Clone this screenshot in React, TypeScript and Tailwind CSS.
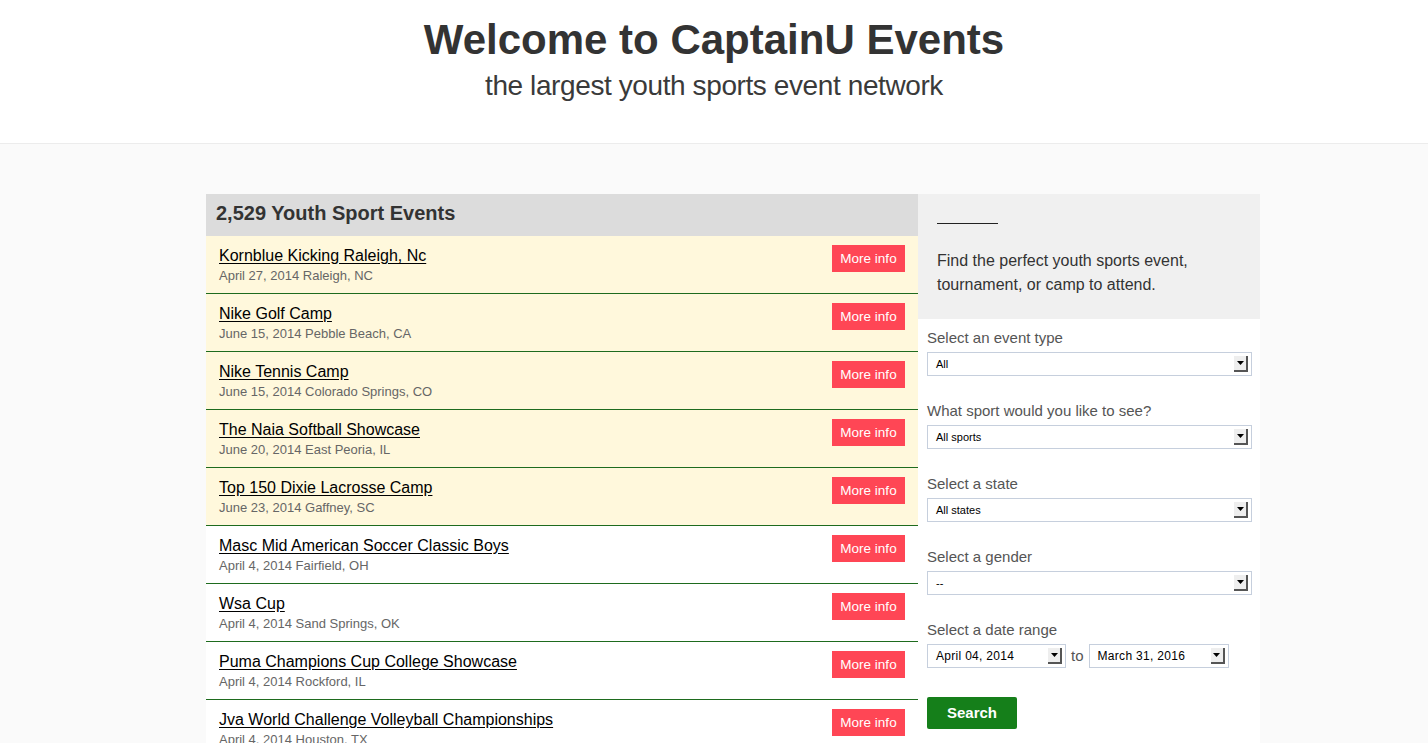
import { ReactNode } from "react";

const events = [
  { name: "Kornblue Kicking Raleigh, Nc", info: "April 27, 2014 Raleigh, NC", featured: true },
  { name: "Nike Golf Camp", info: "June 15, 2014 Pebble Beach, CA", featured: true },
  { name: "Nike Tennis Camp", info: "June 15, 2014 Colorado Springs, CO", featured: true },
  { name: "The Naia Softball Showcase", info: "June 20, 2014 East Peoria, IL", featured: true },
  { name: "Top 150 Dixie Lacrosse Camp", info: "June 23, 2014 Gaffney, SC", featured: true },
  { name: "Masc Mid American Soccer Classic Boys", info: "April 4, 2014 Fairfield, OH", featured: false },
  { name: "Wsa Cup", info: "April 4, 2014 Sand Springs, OK", featured: false },
  { name: "Puma Champions Cup College Showcase", info: "April 4, 2014 Rockford, IL", featured: false },
  { name: "Jva World Challenge Volleyball Championships", info: "April 4, 2014 Houston, TX", featured: false },
];

function Arrow() {
  return (
    <span className="flex h-[16px] w-[14px] items-center justify-center bg-[#eeeeee] border-r-2 border-b-2 border-[#555]">
      <svg width="7" height="4" viewBox="0 0 7 4">
        <path d="M0 0h7L3.5 4z" fill="#000" />
      </svg>
    </span>
  );
}

function FakeSelect({ value, className = "w-[325px]", mono = false }: { value: string; className?: string; mono?: boolean }) {
  return (
    <div className={`flex h-[24px] items-center justify-between border border-[#c6cfdd] bg-white pl-[8px] pr-[3px] ${className}`}>
      <span className={mono ? "text-[12px] tracking-[0.3px] text-black" : "text-[11px] text-black"}>{value}</span>
      <Arrow />
    </div>
  );
}

function Field({ label, children }: { label: string; children: ReactNode }) {
  return (
    <div className="mb-[26px]">
      <div className="mb-[5px] text-[15px] leading-[18px] text-[#555]">{label}</div>
      {children}
    </div>
  );
}

export default function App() {
  return (
    <div className="min-h-screen bg-[#fafafa] text-[#333]" style={{ fontFamily: '"Helvetica Neue", "Liberation Sans", Arial, sans-serif' }}>
      <header className="h-[144px] border-b border-[#ececec] bg-white pt-[16px] text-center">
        <h1 className="text-[42px] font-bold leading-[48px] text-[#333]">Welcome to CaptainU Events</h1>
        <p className="mt-[5px] text-[28px] font-light leading-[34px] tracking-[-0.4px] text-[#3a3a3a]">the largest youth sports event network</p>
      </header>

      <main className="ml-[206px] mt-[50px] flex w-[1054px]">
        <section className="w-[712px] bg-white">
          <div className="flex h-[42px] items-center bg-[#dcdcdc] px-[10px] pb-[5px]">
            <h2 className="text-[20px] font-bold text-[#333]">2,529 Youth Sport Events</h2>
          </div>
          {events.map((e, i) => (
            <div
              key={i}
              className={`flex h-[58px] items-start justify-between border-b border-[#1e6b1e] pl-[13px] pr-[13px] pt-[9px] ${e.featured ? "bg-[#fff8dc]" : "bg-white"}`}
            >
              <div className="pt-[1px]">
                <a href="#" className="block text-[16px] leading-[20px] text-black underline underline-offset-2">{e.name}</a>
                <div className="mt-[1px] text-[13px] leading-[18px] text-[#666]">{e.info}</div>
              </div>
              <button className="h-[27px] w-[73px] bg-[#ff4655] pt-[2px] text-[13.5px] text-white">More info</button>
            </div>
          ))}
        </section>

        <aside className="w-[342px]">
          <div className="h-[125px] bg-[#f0f0f0] px-[19px] pt-[29px]">
            <div className="h-px w-[61px] bg-[#222]" />
            <p className="mt-[25px] text-[16px] leading-[24px] text-[#333]">
              Find the perfect youth sports event,<br />tournament, or camp to attend.
            </p>
          </div>
          <div className="bg-white px-[9px] pt-[10px] pb-[20px]">
            <Field label="Select an event type">
              <FakeSelect value="All" />
            </Field>
            <Field label="What sport would you like to see?">
              <FakeSelect value="All sports" />
            </Field>
            <Field label="Select a state">
              <FakeSelect value="All states" />
            </Field>
            <Field label="Select a gender">
              <FakeSelect value="--" />
            </Field>
            <Field label="Select a date range">
              <div className="flex items-center">
                <FakeSelect value="April 04, 2014" className="w-[139px]" mono />
                <span className="mx-[5px] text-[15px] text-[#555]">to</span>
                <FakeSelect value="March 31, 2016" className="w-[140px]" mono />
              </div>
            </Field>
            <button className="mt-[3px] h-[32px] w-[90px] rounded-[2px] bg-[#157f1a] text-[15px] font-bold text-white">Search</button>
          </div>
        </aside>
      </main>
    </div>
  );
}
